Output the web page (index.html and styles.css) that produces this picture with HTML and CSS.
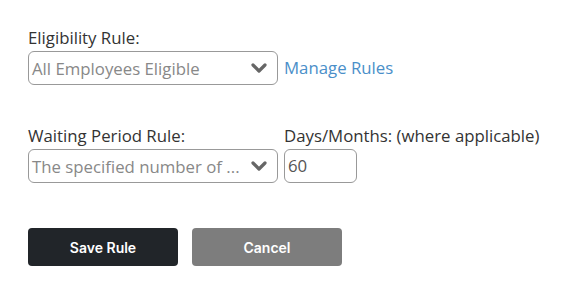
FILE: index.html
```html
<!DOCTYPE html>
<html lang="en">

<head>
    <meta charset="UTF-8">
    <meta name="viewport" content="width=device-width, initial-scale=1.0">
    <title>Eligibility Rule</title>
    <link rel="stylesheet" href="styles.css">
</head>

<body>

    <div class="form">
        <!-- Eligibility rule -->
        <div class="row">
            <div class="field">
                <label for="eligibility">Eligibility Rule:</label>
                <div class="select">
                    <span class="select-text">All Employees Eligible</span>
                    <svg class="chevron" width="18" height="12" viewBox="0 0 18 12">
                        <path d="M3 3 L9 9 L15 3" fill="none" stroke="#666" stroke-width="3.2" stroke-linecap="round" stroke-linejoin="round"/>
                    </svg>
                </div>
            </div>
            <a href="#" class="link">Manage Rules</a>
        </div>

        <!-- Waiting period -->
        <div class="row row-waiting">
            <div class="field">
                <label>Waiting Period Rule:</label>
                <div class="select">
                    <span class="select-text">The specified number of ...</span>
                    <svg class="chevron" width="18" height="12" viewBox="0 0 18 12">
                        <path d="M3 3 L9 9 L15 3" fill="none" stroke="#666" stroke-width="3.2" stroke-linecap="round" stroke-linejoin="round"/>
                    </svg>
                </div>
            </div>
            <div class="field">
                <label>Days/Months: (where applicable)</label>
                <div class="input">60</div>
            </div>
        </div>

        <div class="buttons">
            <button class="btn btn-save">Save Rule</button>
            <button class="btn btn-cancel">Cancel</button>
        </div>
    </div>

</body>

</html>
```

FILE: styles.css
```css
* {
    margin: 0;
    padding: 0;
    box-sizing: border-box;
}

body {
    font-family: 'Open Sans', sans-serif;
    background: #fff;
    color: #333;
}

.form {
    padding: 27px 0 0 28px;
}

.row {
    display: flex;
    align-items: flex-end;
    gap: 6px;
}

.row-waiting {
    margin-top: 40px;
    align-items: flex-start;
}

.field {
    display: flex;
    flex-direction: column;
}

label {
    font-size: 16.8px;
    line-height: 21px;
    margin-bottom: 3px;
    color: #333;
}

.select {
    width: 250px;
    height: 34px;
    border: 1px solid #999;
    border-radius: 6px;
    display: flex;
    align-items: center;
    padding: 0 9px 0 3px;
    gap: 6px;
}

.select-text {
    flex: 1;
    font-size: 16.8px;
    color: #888;
    white-space: nowrap;
}

.chevron {
    flex-shrink: 0;
}

.link {
    font-size: 16.8px;
    color: #4a8fc9;
    text-decoration: none;
    line-height: 34px;
}

.input {
    width: 73px;
    height: 34px;
    border: 1px solid #999;
    border-radius: 6px;
    font-size: 16.8px;
    color: #555;
    padding: 0 3px;
    line-height: 32px;
}

.buttons {
    display: flex;
    gap: 14px;
    margin-top: 45px;
}

.btn {
    width: 150px;
    height: 38px;
    border: none;
    border-radius: 4px;
    font-family: 'Inter', sans-serif;
    font-size: 14px;
    font-weight: 600;
    color: #fff;
    cursor: pointer;
}

.btn-save {
    background: #212529;
}

.btn-cancel {
    background: #7d7d7d;
}
```
